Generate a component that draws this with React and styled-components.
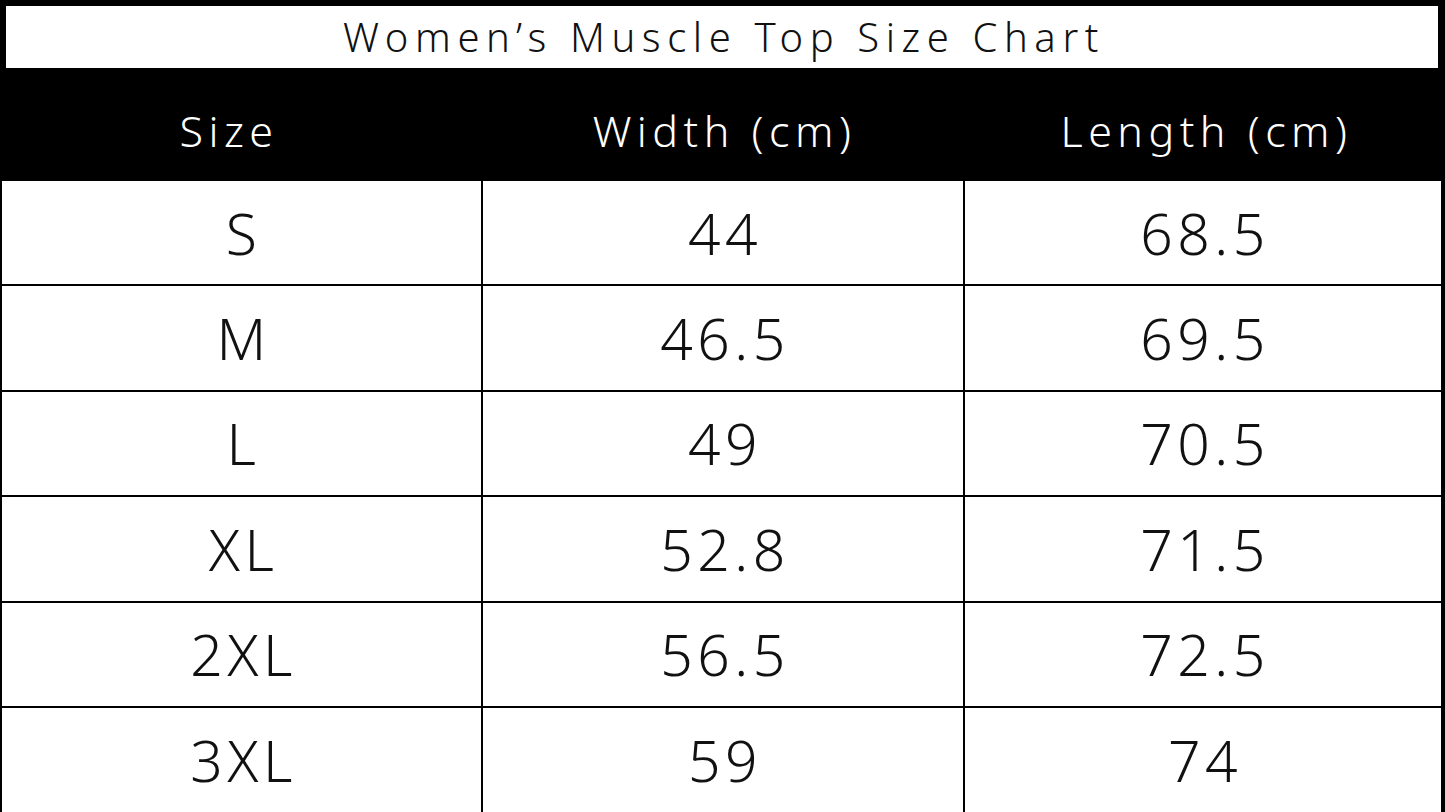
import React from 'react'
import styled, { createGlobalStyle } from 'styled-components'

const GlobalStyle = createGlobalStyle`
  html, body {
    margin: 0;
    padding: 0;
    background: #000;
  }
  body {
    font-family: "Noto Sans", "Open Sans", sans-serif;
  }
`

const rows = [
  ['S', '44', '68.5'],
  ['M', '46.5', '69.5'],
  ['L', '49', '70.5'],
  ['XL', '52.8', '71.5'],
  ['2XL', '56.5', '72.5'],
  ['3XL', '59', '74'],
]

function App() {
  return (
    <Page>
      <GlobalStyle />
      <Title>Women’s Muscle Top Size Chart</Title>
      <HeadRow>
        <HeadCell>Size</HeadCell>
        <HeadCell>Width (cm)</HeadCell>
        <HeadCell>Length (cm)</HeadCell>
      </HeadRow>
      <Table>
        {rows.map((r) =>
          r.map((v, i) => <Cell key={r[0] + i}>{v}</Cell>)
        )}
      </Table>
    </Page>
  )
}

const Page = styled.div`
  width: 1445px;
  height: 812px;
  overflow: hidden;
  background: #000;
  display: flex;
  flex-direction: column;
  padding-top: 6px;
  box-sizing: border-box;
`

const Title = styled.div`
  margin: 0 7px 0 6px;
  height: 62px;
  background: #fff;
  color: #111;
  font-size: 40px;
  font-weight: 300;
  letter-spacing: 6.6px;
  display: flex;
  align-items: center;
  justify-content: center;
  padding: 0 0 2px 4px;
  box-sizing: border-box;
`

const HeadRow = styled.div`
  height: 113px;
  display: grid;
  grid-template-columns: 481px 482px 1fr;
  align-items: center;
  padding-top: 12px;
  box-sizing: border-box;
`

const HeadCell = styled.div`
  color: #fff;
  font-size: 43px;
  font-weight: 300;
  letter-spacing: 5.5px;
  text-align: center;
  padding-left: 5px;
  &:first-child {
    padding-right: 28px;
  }
`

const Table = styled.div`
  margin: 0 4px 0 2px;
  flex: 1;
  display: grid;
  grid-template-columns: 479px 480px 1fr;
  grid-template-rows: repeat(5, 103.4px) 1fr;
  gap: 2px;
  background: #000;
`

const Cell = styled.div`
  background: #fff;
  color: #111;
  font-size: 57px;
  font-weight: 300;
  letter-spacing: 4.5px;
  display: flex;
  align-items: center;
  justify-content: center;
  padding-left: 4px;
`

export default App
